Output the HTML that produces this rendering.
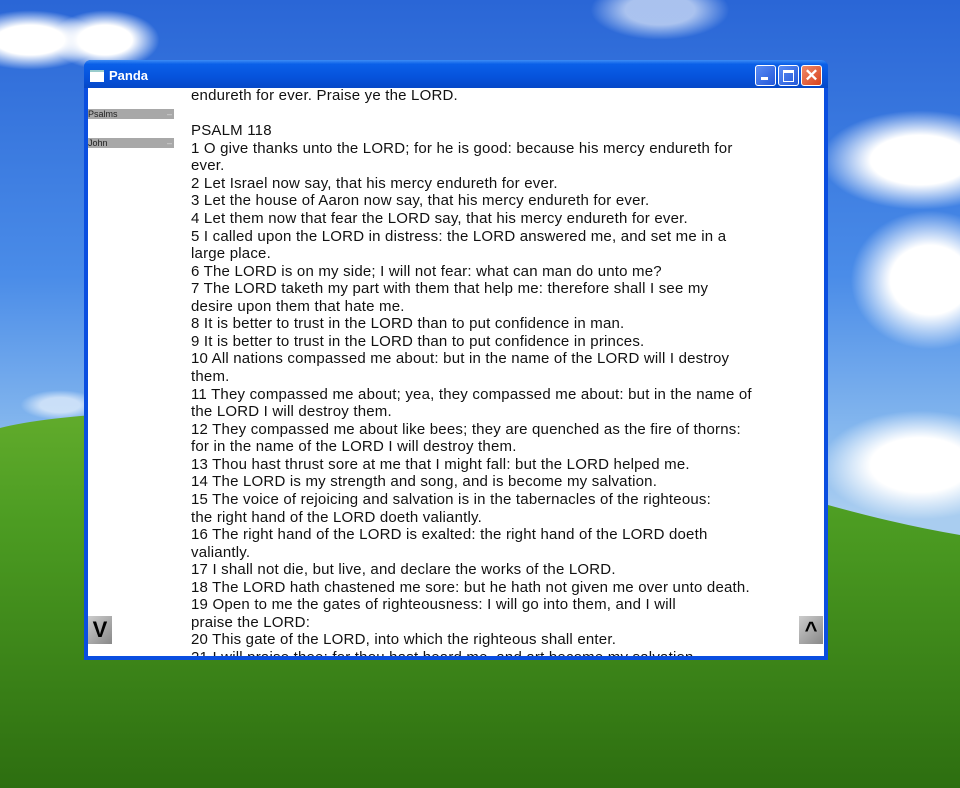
<!DOCTYPE html>
<html><head><meta charset="utf-8"><style>
html,body{margin:0;padding:0;width:960px;height:788px;overflow:hidden;}
body{position:relative;background:linear-gradient(#2a66d6 0%,#4a8ce8 35%,#86b8ee 55%,#a9cdf0 65%);font-family:"Liberation Sans",sans-serif;}
.cloud{position:absolute;border-radius:50%;background:radial-gradient(ellipse at center,#fff 35%,rgba(255,255,255,0) 70%);}
.win{position:absolute;left:84px;top:60px;width:744px;height:600px;background:#0a4ee0;border-radius:7px 7px 0 0;}
.tb{position:absolute;left:0;top:0;width:744px;height:28px;border-radius:7px 7px 0 0;background:linear-gradient(#3d8cf5 0%,#0a5fe8 15%,#0653dc 60%,#0548c8 100%);}
.tb .ic{position:absolute;left:6px;top:10px;width:14px;height:10px;background:#fff;border-top:2px solid #9cc;}
.tb .t{position:absolute;left:25px;top:8px;color:#fff;font-weight:bold;font-size:13px;}
.btn{position:absolute;top:5px;width:19px;height:19px;border:1px solid #fff;border-radius:3px;background:linear-gradient(135deg,#5a8cf5,#2458d8);}
.cl{position:absolute;left:4px;top:28px;width:736px;height:568px;background:#fff;overflow:hidden;}
.side{position:absolute;left:0;width:86px;height:10px;background:#a8a8a8;font-size:9px;color:#222;line-height:10px;}
.side span{position:absolute;right:2px;top:0;color:#ddd;}
.txt{position:absolute;left:103px;top:-1px;font-size:15px;line-height:17.57px;color:#111;white-space:pre;letter-spacing:0.2px;}
.arr{position:absolute;width:24px;height:28px;background:linear-gradient(135deg,#ccc,#888);font-size:22px;font-weight:bold;text-align:center;line-height:28px;color:#000;}
</style></head><body>
<div class="cloud" style="left:-40px;top:10px;width:140px;height:60px"></div>
<div class="cloud" style="left:50px;top:10px;width:110px;height:60px"></div>
<div class="cloud" style="left:590px;top:-20px;width:140px;height:60px;opacity:.6"></div>
<div class="cloud" style="left:820px;top:110px;width:200px;height:100px"></div>
<div class="cloud" style="left:850px;top:210px;width:160px;height:140px"></div>
<div class="cloud" style="left:820px;top:410px;width:200px;height:110px"></div>
<div class="cloud" style="left:20px;top:390px;width:80px;height:30px;opacity:.6"></div>
<svg style="position:absolute;left:0;top:0" width="960" height="788">
<defs><linearGradient id="g" x1="0" y1="0" x2="0" y2="1"><stop offset="0" stop-color="#62ac2c"/><stop offset="0.3" stop-color="#4c9c22"/><stop offset="1" stop-color="#2d6e10"/></linearGradient></defs>
<path d="M0,428 Q80,408 300,410 Q600,420 828,505 Q900,525 960,535 L960,788 L0,788 Z" fill="url(#g)"/>
</svg>
<div class="win">
 <div class="tb"><div class="ic"></div><div class="t">Panda</div>
  <div class="btn" style="left:671px"><div style="position:absolute;left:5px;top:11px;width:7px;height:3px;background:#fff"></div></div>
  <div class="btn" style="left:694px"><div style="position:absolute;left:4px;top:4px;width:9px;height:8px;border:1px solid #fff;border-top:3px solid #fff"></div></div>
  <div class="btn" style="left:717px;background:linear-gradient(135deg,#f08a6a,#d8421c);color:#fff;font-size:17px;font-weight:bold;text-align:center;line-height:19px">✕</div>
 </div>
 <div class="cl">
  <div class="side" style="top:21px">Psalms<span>–</span></div>
  <div class="side" style="top:50px">John<span>–</span></div>
<div class="txt">endureth for ever. Praise ye the LORD.

PSALM 118
1 O give thanks unto the LORD; for he is good: because his mercy endureth for
ever.
2 Let Israel now say, that his mercy endureth for ever.
3 Let the house of Aaron now say, that his mercy endureth for ever.
4 Let them now that fear the LORD say, that his mercy endureth for ever.
5 I called upon the LORD in distress: the LORD answered me, and set me in a
large place.
6 The LORD is on my side; I will not fear: what can man do unto me?
7 The LORD taketh my part with them that help me: therefore shall I see my
desire upon them that hate me.
8 It is better to trust in the LORD than to put confidence in man.
9 It is better to trust in the LORD than to put confidence in princes.
10 All nations compassed me about: but in the name of the LORD will I destroy
them.
11 They compassed me about; yea, they compassed me about: but in the name of
the LORD I will destroy them.
12 They compassed me about like bees; they are quenched as the fire of thorns:
for in the name of the LORD I will destroy them.
13 Thou hast thrust sore at me that I might fall: but the LORD helped me.
14 The LORD is my strength and song, and is become my salvation.
15 The voice of rejoicing and salvation is in the tabernacles of the righteous:
the right hand of the LORD doeth valiantly.
16 The right hand of the LORD is exalted: the right hand of the LORD doeth
valiantly.
17 I shall not die, but live, and declare the works of the LORD.
18 The LORD hath chastened me sore: but he hath not given me over unto death.
19 Open to me the gates of righteousness: I will go into them, and I will
praise the LORD:
20 This gate of the LORD, into which the righteous shall enter.
21 I will praise thee: for thou hast heard me, and art become my salvation.</div>
  <div class="arr" style="left:0;top:528px">V</div>
  <div class="arr" style="left:711px;top:528px">^</div>
 </div>
</div>
</body></html>
